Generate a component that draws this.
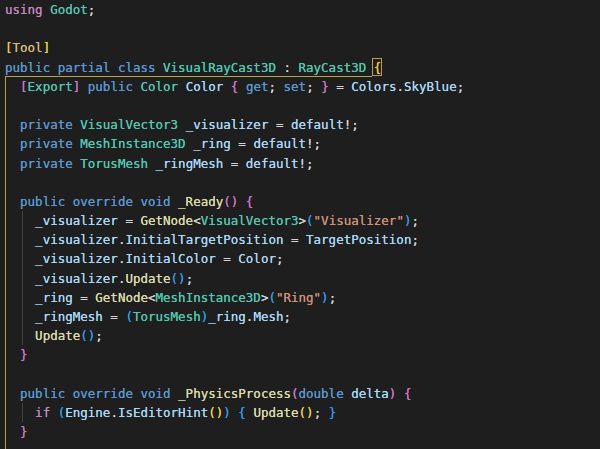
const c = {
  kw: 'text-[#5b96d2]',
  ctrl: 'text-[#c586c0]',
  type: 'text-[#4ec9b0]',
  fn: 'text-[#dcdcaa]',
  v: 'text-[#a8d8f8]',
  str: 'text-[#ce9178]',
  p: 'text-[#d4d4d4]',
  b1: 'text-[#f0cf3c]',
  b2: 'text-[#c978c6]',
  b3: 'text-[#2f9be8]',
  attr: 'text-[#d7ba7d]',
}

type Tok = [string, string]

const lines: Tok[][] = [
  [['using', c.ctrl], [' ', c.p], ['Godot', c.type], [';', c.p]],
  [],
  [['[', c.b1], ['Tool', c.attr], [']', c.b1]],
  [
    ['public partial class', c.kw],
    [' ', c.p],
    ['VisualRayCast3D', c.type],
    [' : ', c.p],
    ['RayCast3D', c.type],
    [' ', c.p],
    ['{', c.b1],
  ],
  [
    ['  ', c.p],
    ['[', c.b2],
    ['Export', c.type],
    [']', c.b2],
    [' public ', c.kw],
    ['Color', c.type],
    [' ', c.p],
    ['Color', c.v],
    [' ', c.p],
    ['{', c.b2],
    [' get', c.kw],
    ['; ', c.p],
    ['set', c.kw],
    ['; ', c.p],
    ['}', c.b2],
    [' = ', c.p],
    ['Colors', c.v],
    ['.', c.p],
    ['SkyBlue', c.v],
    [';', c.p],
  ],
  [],
  [['  private ', c.kw], ['VisualVector3', c.type], [' ', c.p], ['_visualizer', c.v], [' = ', c.p], ['default', c.v], ['!;', c.p]],
  [['  private ', c.kw], ['MeshInstance3D', c.type], [' ', c.p], ['_ring', c.v], [' = ', c.p], ['default', c.v], ['!;', c.p]],
  [['  private ', c.kw], ['TorusMesh', c.type], [' ', c.p], ['_ringMesh', c.v], [' = ', c.p], ['default', c.v], ['!;', c.p]],
  [],
  [['  public override void ', c.kw], ['_Ready', c.fn], ['()', c.b2], [' ', c.p], ['{', c.b2]],
  [
    ['    _visualizer', c.v],
    [' = ', c.p],
    ['GetNode', c.fn],
    ['<', c.p],
    ['VisualVector3', c.type],
    ['>', c.p],
    ['(', c.b3],
    ['"Visualizer"', c.str],
    [')', c.b3],
    [';', c.p],
  ],
  [['    _visualizer', c.v], ['.', c.p], ['InitialTargetPosition', c.v], [' = ', c.p], ['TargetPosition', c.v], [';', c.p]],
  [['    _visualizer', c.v], ['.', c.p], ['InitialColor', c.v], [' = ', c.p], ['Color', c.v], [';', c.p]],
  [['    _visualizer', c.v], ['.', c.p], ['Update', c.fn], ['()', c.b3], [';', c.p]],
  [
    ['    _ring', c.v],
    [' = ', c.p],
    ['GetNode', c.fn],
    ['<', c.p],
    ['MeshInstance3D', c.type],
    ['>', c.p],
    ['(', c.b3],
    ['"Ring"', c.str],
    [')', c.b3],
    [';', c.p],
  ],
  [
    ['    _ringMesh', c.v],
    [' = ', c.p],
    ['(', c.b3],
    ['TorusMesh', c.type],
    [')', c.b3],
    ['_ring', c.v],
    ['.', c.p],
    ['Mesh', c.v],
    [';', c.p],
  ],
  [['    Update', c.fn], ['()', c.b3], [';', c.p]],
  [['  ', c.p], ['}', c.b2]],
  [],
  [
    ['  public override void ', c.kw],
    ['_PhysicsProcess', c.fn],
    ['(', c.b2],
    ['double', c.kw],
    [' ', c.p],
    ['delta', c.v],
    [')', c.b2],
    [' ', c.p],
    ['{', c.b2],
  ],
  [
    ['    if', c.ctrl],
    [' ', c.p],
    ['(', c.b3],
    ['Engine', c.v],
    ['.', c.p],
    ['IsEditorHint', c.v],
    ['()', c.b1],
    [')', c.b3],
    [' ', c.p],
    ['{', c.b3],
    [' ', c.p],
    ['Update', c.fn],
    ['()', c.b1],
    ['; ', c.p],
    ['}', c.b3],
  ],
  [['  ', c.p], ['}', c.b2]],
]

export default function App() {
  return (
    <div className="relative w-[600px] h-[449px] overflow-hidden bg-[#1e1e1e] pl-[5px] font-['DejaVu_Sans_Mono',monospace] text-[12.5px] leading-[19.2px] [text-shadow:0_0_0.6px_currentColor]">
      {/* bracket pair guide for the class body */}
      <div className="absolute left-[5px] top-[76px] w-[367px] h-px bg-[#b9a23e]" />
      <div className="absolute left-[5px] top-[76px] bottom-0 w-px bg-[#b9a23e]" />
      <div className="absolute left-[372px] top-[58px] w-[10px] h-[18px] border border-[#b9a23e]" />
      {/* indent guides */}
      <div className="absolute left-[22px] top-[211px] h-[134px] w-px bg-[#404040]" />
      <div className="absolute left-[22px] top-[403px] h-[19px] w-px bg-[#404040]" />

      {lines.map((line, i) => (
        <div key={i} className="h-[19.2px] whitespace-pre">
          {line.map(([text, cls], j) => (
            <span key={j} className={cls}>
              {text}
            </span>
          ))}
        </div>
      ))}
    </div>
  )
}
